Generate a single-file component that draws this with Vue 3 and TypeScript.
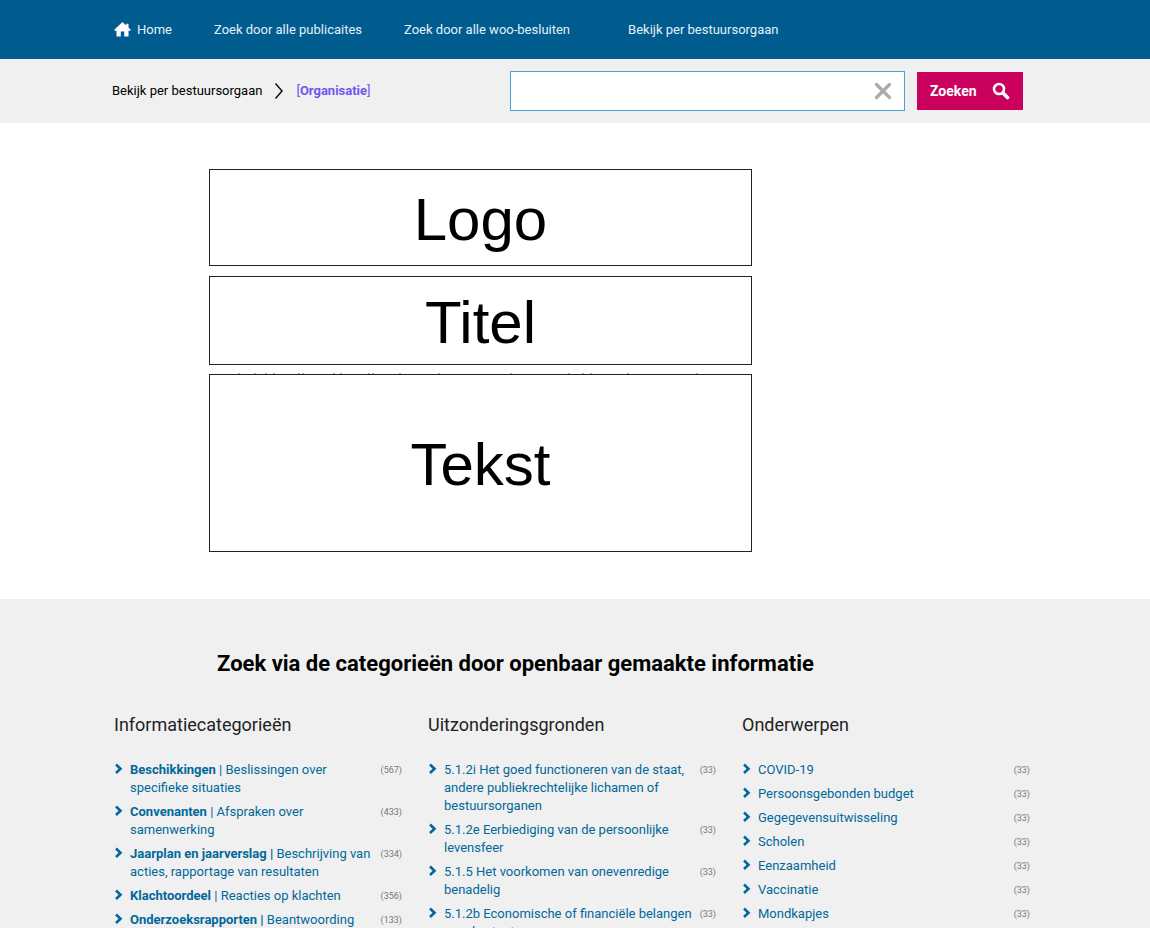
<script setup lang="ts">
import { ref } from 'vue'

interface Item {
  strong?: string
  text: string
  count: number
}
interface Column {
  title: string
  items: Item[]
}

const query = ref('')

// Horizontal positions of the letter tops that peek out above the text block
const peeks: number[] = [28, 44, 55, 63, 88, 92, 123, 130, 158, 162, 189, 228, 300, 358, 372, 380, 417, 486]

const columns: Column[] = [
  {
    title: 'Informatiecategorieën',
    items: [
      { strong: 'Beschikkingen', text: '| Beslissingen over specifieke situaties', count: 567 },
      { strong: 'Convenanten', text: '| Afspraken over samenwerking', count: 433 },
      { strong: 'Jaarplan en jaarverslag |', text: 'Beschrijving van acties, rapportage van resultaten', count: 334 },
      { strong: 'Klachtoordeel', text: '| Reacties op klachten', count: 356 },
      { strong: 'Onderzoeksrapporten |', text: 'Beantwoording', count: 133 },
    ],
  },
  {
    title: 'Uitzonderingsgronden',
    items: [
      { text: '5.1.2i Het goed functioneren van de staat, andere publiekrechtelijke lichamen of bestuursorganen', count: 33 },
      { text: '5.1.2e Eerbiediging van de persoonlijke levensfeer', count: 33 },
      { text: '5.1.5 Het voorkomen van onevenredige benadelig', count: 33 },
      { text: '5.1.2b Economische of financiële belangen van de staat', count: 33 },
    ],
  },
  {
    title: 'Onderwerpen',
    items: [
      { text: 'COVID-19', count: 33 },
      { text: 'Persoonsgebonden budget', count: 33 },
      { text: 'Gegegevensuitwisseling', count: 33 },
      { text: 'Scholen', count: 33 },
      { text: 'Eenzaamheid', count: 33 },
      { text: 'Vaccinatie', count: 33 },
      { text: 'Mondkapjes', count: 33 },
    ],
  },
]
</script>

<template>
  <div class="page">
    <nav class="topnav" aria-label="Hoofdmenu">
      <a class="home" href="#">
        <svg width="17" height="15" viewBox="0 0 17 15" aria-hidden="true">
          <path fill="#fff" d="M8.500 0 0.500 7.500v1.300h2V14.500h4.300V9.500h3.400v5h4.300V8.800h2V7.500L14.500 5.600V1.800h-2.200v1.700z" />
        </svg>
        <span>Home</span>
      </a>
      <a href="#">Zoek door alle publicaites</a>
      <a href="#">Zoek door alle woo-besluiten</a>
      <a class="last" href="#">Bekijk per bestuursorgaan</a>
    </nav>

    <div class="subbar">
      <div class="crumbs">
        <a href="#">Bekijk per bestuursorgaan</a>
        <svg width="10" height="18" viewBox="0 0 10 18" aria-hidden="true">
          <path d="M1.500 1.500 8 9l-6.500 7.500" fill="none" stroke="#111" stroke-width="1.500" />
        </svg>
        <span class="current">[<b>Organisatie</b>]</span>
      </div>
      <form class="search" @submit.prevent>
        <div class="field">
          <input v-model="query" type="text" aria-label="Zoekterm" />
          <button class="clear" type="button" aria-label="Wissen" @click="query = ''">
            <svg width="18" height="18" viewBox="0 0 18 18" aria-hidden="true">
              <path d="M2.500 2.500l13 13M15.500 2.500l-13 13" stroke="#aaa" stroke-width="3.200" stroke-linecap="round" />
            </svg>
          </button>
        </div>
        <button class="submit" type="submit">
          <span>Zoeken</span>
          <svg width="18" height="18" viewBox="0 0 18 18" aria-hidden="true">
            <circle cx="7" cy="7" r="5" fill="none" stroke="#fff" stroke-width="2.600" />
            <path d="M11 11l4.500 4.500" stroke="#fff" stroke-width="3.600" stroke-linecap="round" />
          </svg>
        </button>
      </form>
    </div>

    <main class="blocks">
      <div class="block logo">Logo</div>
      <h1 class="block title">Titel</h1>
      <div class="block text">
        <svg class="peek" width="541" height="1" viewBox="0 0 541 1" aria-hidden="true">
          <rect v-for="x in peeks" :key="x" :x="x" y="0" width="2" height="1" fill="#aaa" />
        </svg>
        Tekst
      </div>
    </main>

    <section class="categories">
      <h2>Zoek via de categorieën door openbaar gemaakte informatie</h2>
      <div class="columns">
        <div v-for="column in columns" :key="column.title" class="column">
          <h3>{{ column.title }}</h3>
          <ul>
            <li v-for="item in column.items" :key="item.text">
              <svg width="9" height="12" viewBox="0 0 9 12" aria-hidden="true">
                <path d="M2 1.500 6.500 5.700 2 10" fill="none" stroke="#01689b" stroke-width="2.600" />
              </svg>
              <a href="#"><template v-if="item.strong"><b>{{ item.strong }}</b>{{ ' ' }}</template>{{ item.text }}</a>
              <span class="count">({{ item.count }})</span>
            </li>
          </ul>
        </div>
      </div>
    </section>
  </div>
</template>

<style>
body {
  margin: 0;
  background: #fff;
}
</style>

<style scoped>
.page {
  min-height: 100vh;
  font-family: Roboto, "Noto Sans", sans-serif;
  font-size: 13px;
  line-height: 18px;
  color: #000;
}
a {
  color: inherit;
  text-decoration: none;
}
.topnav {
  display: flex;
  align-items: center;
  gap: 42px;
  height: 59px;
  padding-left: 114px;
  background: #005b8f;
  color: #e3f1f8;
}
.home {
  display: flex;
  align-items: center;
  gap: 6px;
}
.last {
  margin-left: 16px;
}
.subbar {
  display: flex;
  align-items: center;
  justify-content: space-between;
  height: 64px;
  padding: 0 127px 0 112px;
  background: #f0f0f0;
}
.crumbs {
  display: flex;
  align-items: center;
  gap: 12px;
}
.current {
  color: #7254f3;
}
.search {
  display: flex;
  align-items: center;
  gap: 12px;
}
.field {
  display: flex;
  align-items: center;
  box-sizing: border-box;
  width: 395px;
  height: 40px;
  border: 1px solid #4ba3d3;
  background: #fff;
}
.field input {
  flex: 1;
  min-width: 0;
  height: 100%;
  padding: 0 12px;
  border: 0;
  outline: 0;
  background: none;
  font: inherit;
}
button {
  border: 0;
  font: inherit;
  cursor: pointer;
}
.clear {
  display: flex;
  padding: 0 12px;
  background: none;
}
.submit {
  display: flex;
  align-items: center;
  justify-content: space-between;
  width: 106px;
  height: 38px;
  padding: 0 13px;
  background: #ca005d;
  color: #fff;
  font-size: 14px;
  font-weight: 700;
}
.blocks {
  display: flex;
  flex-direction: column;
  gap: 10px;
  padding: 46px 398px 47px 209px;
  font-family: "Liberation Sans", Arial, sans-serif;
}
.block {
  display: flex;
  align-items: center;
  justify-content: center;
  box-sizing: border-box;
  margin: 0;
  padding-top: 4px;
  border: 1px solid #222;
  background: #fff;
  font-size: 60px;
  font-weight: 400;
  line-height: 68px;
}
.logo {
  height: 97px;
}
.title {
  height: 89px;
}
.text {
  position: relative;
  height: 178px;
  margin-top: -1px;
}
.peek {
  position: absolute;
  top: -2px;
  left: 0;
}
.categories {
  padding: 50px 118px 24px 114px;
  background: #f0f0f0;
}
h2 {
  margin: 0 0 32px 103px;
  font-size: 22px;
  font-weight: 700;
  line-height: 30px;
}
.columns {
  display: grid;
  grid-template-columns: repeat(3, minmax(0, 1fr));
  gap: 24px;
}
h3 {
  margin: 0 0 22px;
  font-size: 18px;
  font-weight: 400;
  line-height: 28px;
  color: #222;
}
ul {
  display: flex;
  flex-direction: column;
  gap: 6px;
  margin: 0;
  padding: 0;
  list-style: none;
}
li {
  display: grid;
  grid-template-columns: 9px 1fr auto;
  column-gap: 7px;
  padding-right: 2px;
  color: #01689b;
}
li svg {
  margin-top: 2px;
}
.count {
  font-size: 9px;
  color: #777;
}
</style>
